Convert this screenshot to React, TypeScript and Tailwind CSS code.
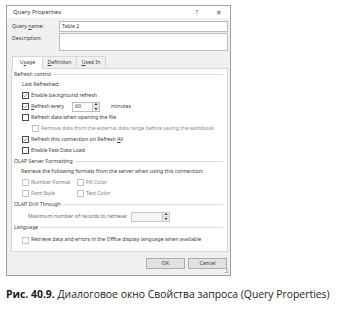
import React from "react";

function Cb({ checked = false, disabled = false }: { checked?: boolean; disabled?: boolean }) {
  return (
    <span
      className={
        disabled
          ? "w-[7px] h-[7px] border border-[#c2c2c2] bg-white flex items-center justify-center shrink-0"
          : "w-[7px] h-[7px] border border-[#4a4a4a] bg-white flex items-center justify-center shrink-0"
      }
    >
      {checked && (
        <svg viewBox="0 0 7 7" width="7" height="7" className="block">
          <path d="M1 3.4 L2.7 5.1 L6 1.6" stroke="#333" strokeWidth="0.8" fill="none" />
        </svg>
      )}
    </span>
  );
}

function Header({ label }: { label: string }) {
  return (
    <div className="flex items-center pl-[2px] pr-[4px] gap-[2px]">
      <span className="whitespace-nowrap">{label}</span>
      <span className="flex-1 h-px bg-[#dcdcdc]" />
    </div>
  );
}

function Spin() {
  return (
    <span className="w-[7px] h-[8px] flex flex-col border-l border-[#c8c8c8] bg-[#f0f0f0]">
      <span className="flex-1 flex items-center justify-center border-b border-[#d0d0d0]">
        <svg viewBox="0 0 5 3" width="4" height="2"><path d="M0 3 L2.5 0 L5 3Z" fill="#333" /></svg>
      </span>
      <span className="flex-1 flex items-center justify-center">
        <svg viewBox="0 0 5 3" width="4" height="2"><path d="M0 0 L2.5 3 L5 0Z" fill="#333" /></svg>
      </span>
    </span>
  );
}

export default function App() {
  return (
    <div className="w-[337px] h-[309px] bg-white overflow-hidden font-['Noto_Sans',sans-serif] text-[#3a3a3a]">
      <div className="pt-[5px] pl-[6px]">
        <div className="w-[225px] h-[271px] border border-[#a0a0a0] bg-[#f0f0f0] flex flex-col text-[5.2px] leading-none whitespace-nowrap">
          {/* title bar */}
          <div className="h-[15px] bg-white flex items-center pl-[6px] pr-[8px]">
            <span className="text-[6px] flex-1">Query Properties</span>
            <span className="text-[6px] text-[#555] mr-[18px]">?</span>
            <span className="text-[7px] text-[#555]">✕</span>
          </div>
          <div className="flex-1 flex flex-col pl-[4px] pr-[2px]">
            {/* query name */}
            <div className="mt-[3px] flex items-center h-[11px]">
              <span className="w-[48px] pl-[1px]">
                Query <u>n</u>ame:
              </span>
              <div className="flex-1 h-[11px] bg-white border border-[#bcbcbc] flex items-center pl-[2px]">Table 2</div>
            </div>
            <div className="mt-[1px] flex items-start h-[18px]">
              <span className="w-[48px] pl-[1px] pt-[3px]">Description:</span>
              <div className="flex-1 h-[18px] bg-white border border-[#bcbcbc]" />
            </div>
            {/* tabs */}
            <div className="mt-[5px] flex h-[12px] pl-[1px] relative z-10">
              <div className="w-[31px] h-[13px] bg-white border border-[#d6d6d6] border-b-0 flex items-center justify-center">
                <span>
                  U<u>s</u>age
                </span>
              </div>
              <div className="w-[34px] h-[12px] border border-[#d6d6d6] border-l-0 border-b-0 flex items-center justify-center bg-[#f0f0f0]">
                <span>
                  <u>D</u>efinition
                </span>
              </div>
              <div className="w-[29px] h-[12px] border border-[#d6d6d6] border-l-0 border-b-0 flex items-center justify-center bg-[#f0f0f0]">
                <span>
                  <u>U</u>sed In
                </span>
              </div>
            </div>
            {/* panel */}
            <div className="h-[184px] bg-white border border-[#d6d6d6] flex flex-col pt-[1px]">
              <div className="h-[10px] flex flex-col justify-center">
                <Header label="Refresh control" />
              </div>
              <div className="h-[10px] flex items-center pl-[10px]">Last Refreshed:</div>
              <div className="h-[11px] flex items-center pl-[10px] gap-[2px]">
                <Cb checked />
                <span>Enable background refresh</span>
              </div>
              <div className="h-[11px] flex items-center pl-[10px] gap-[2px]">
                <Cb checked />
                <span className="w-[39px]">
                  <u>R</u>efresh every
                </span>
                <div className="w-[28px] h-[10px] bg-white border border-[#bcbcbc] flex items-center">
                  <span className="flex-1 pl-[2px]">60</span>
                  <Spin />
                </div>
                <span className="ml-[9px]">minutes</span>
              </div>
              <div className="h-[11px] flex items-center pl-[10px] gap-[2px]">
                <Cb />
                <span>Refresh data when opening the file</span>
              </div>
              <div className="h-[11px] flex items-center pl-[20px] gap-[2px] text-[#8a8a8a]">
                <Cb disabled />
                <span>Remove data from the external data range before saving the workbook</span>
              </div>
              <div className="h-[11px] flex items-center pl-[10px] gap-[2px]">
                <Cb checked />
                <span>
                  Refresh this connection on Refresh <u>A</u>ll
                </span>
              </div>
              <div className="h-[11px] flex items-center pl-[10px] gap-[2px]">
                <Cb />
                <span>Enable Fast Data Load</span>
              </div>
              <div className="h-[11px] flex flex-col justify-center">
                <Header label="OLAP Server Formatting" />
              </div>
              <div className="h-[10px] flex items-center pl-[9px]">
                Retrieve the following formats from the server when using this connection:
              </div>
              <div className="h-[11px] flex items-center pl-[10px] text-[#7a7a7a]">
                <div className="w-[55px] flex items-center gap-[2px]">
                  <Cb disabled />
                  <span>Number Format</span>
                </div>
                <div className="flex items-center gap-[2px]">
                  <Cb disabled />
                  <span>Fill Color</span>
                </div>
              </div>
              <div className="h-[11px] flex items-center pl-[10px] text-[#7a7a7a]">
                <div className="w-[55px] flex items-center gap-[2px]">
                  <Cb disabled />
                  <span>Font Style</span>
                </div>
                <div className="flex items-center gap-[2px]">
                  <Cb disabled />
                  <span>Text Color</span>
                </div>
              </div>
              <div className="h-[12px] flex flex-col justify-center">
                <Header label="OLAP Drill Through" />
              </div>
              <div className="h-[11px] flex items-center pl-[16px] gap-[4px] text-[#6a6a6a]">
                <span>Maximum number of records to retrieve:</span>
                <div className="w-[39px] h-[10px] bg-[#f4f4f4] border border-[#c8c8c8] flex items-center justify-end">
                  <Spin />
                </div>
              </div>
              <div className="h-[12px] flex flex-col justify-center">
                <Header label="Language" />
              </div>
              <div className="h-[12px] flex items-center pl-[10px] gap-[2px]">
                <Cb disabled />
                <span>Retrieve data and errors in the Office display language when available</span>
              </div>
            </div>
            {/* buttons */}
            <div className="flex justify-end gap-[3px] mt-[6px] pr-[1px]">
              <div className="w-[39px] h-[11px] border border-[#adadad] bg-[#e1e1e1] flex items-center justify-center">OK</div>
              <div className="w-[39px] h-[11px] border border-[#adadad] bg-[#e1e1e1] flex items-center justify-center">Cancel</div>
            </div>
            <div className="flex-1 flex items-end justify-end">
              <svg width="5" height="5" viewBox="0 0 5 5" className="mb-[1px] -mr-[1px]">
                <rect x="3" y="0" width="1" height="1" fill="#a0a0a0" />
                <rect x="2" y="1.5" width="1" height="1" fill="#a0a0a0" />
                <rect x="3.5" y="1.5" width="1" height="1" fill="#a0a0a0" />
                <rect x="0.5" y="3" width="1" height="1" fill="#a0a0a0" />
                <rect x="2" y="3" width="1" height="1" fill="#a0a0a0" />
                <rect x="3.5" y="3" width="1" height="1" fill="#a0a0a0" />
              </svg>
            </div>
          </div>
        </div>
      </div>
      <div className="mt-[13px] pl-[6px] text-[10.4px] leading-none whitespace-nowrap font-['Open_Sans',sans-serif] text-[#1a1a1a]">
        <span className="font-bold">Рис. 40.9.</span> Диалоговое окно Свойства запроса (Query Properties)
      </div>
    </div>
  );
}
